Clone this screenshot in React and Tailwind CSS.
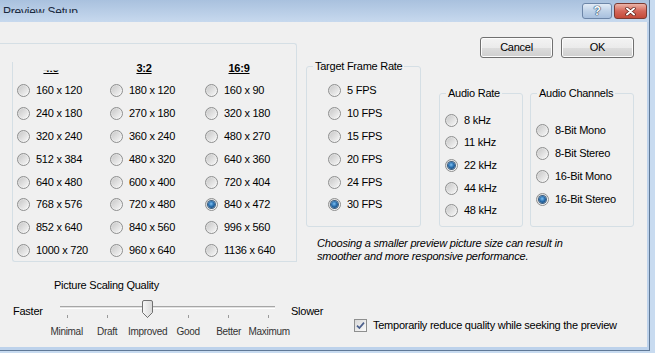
import React from "react";

const col1 = ["160 x 120", "240 x 180", "320 x 240", "512 x 384", "640 x 480", "768 x 576", "852 x 640", "1000 x 720"];
const col2 = ["180 x 120", "270 x 180", "360 x 240", "480 x 320", "600 x 400", "720 x 480", "840 x 560", "960 x 640"];
const col3 = ["160 x 90", "320 x 180", "480 x 270", "640 x 360", "720 x 404", "840 x 472", "996 x 560", "1136 x 640"];

function Radio({ checked }) {
  return (
    <span className="flex h-[13px] w-[13px] shrink-0 items-center justify-center rounded-full border border-[#8e8f8f] bg-gradient-to-br from-[#d4d4d4] to-[#fdfdfd]">
      {checked ? (
        <span className="h-[7px] w-[7px] rounded-full bg-[radial-gradient(circle_at_45%_40%,#7cc0f2_0%,#2a6faf_45%,#0d355e_100%)] shadow-[0_0_0_1px_#3d5f80]" />
      ) : (
        <span className="h-[9px] w-[9px] rounded-full bg-gradient-to-br from-[#c9c9c9] to-[#f5f5f5]" />
      )}
    </span>
  );
}

function RadioItem({ label, checked }) {
  return (
    <div className="flex h-[20px] items-center gap-[6px] whitespace-nowrap">
      <Radio checked={checked} />
      <span className="leading-[13px]">{label}</span>
    </div>
  );
}

function Button({ children }) {
  return (
    <div className="flex h-[21px] w-[73px] items-center justify-center rounded-[3px] border border-[#707070] bg-[linear-gradient(#f3f3f3,#ebebeb_50%,#dddddd_51%,#cfcfcf)] shadow-[inset_0_0_0_1px_#fcfcfc] leading-[13px]">
      {children}
    </div>
  );
}

export default function App() {
  const rows = [];
  for (let i = 0; i < 8; i++) {
    rows.push(<RadioItem key={"a" + i} label={col1[i]} />);
    rows.push(<RadioItem key={"b" + i} label={col2[i]} />);
    rows.push(<RadioItem key={"c" + i} label={col3[i]} checked={i === 5} />);
  }
  const labels = ["Minimal", "Draft", "Improved", "Good", "Better", "Maximum"];

  return (
    <div className="h-[353px] w-[655px] overflow-hidden bg-[#c8dbf0] font-['Liberation_Sans',Arial,sans-serif] text-[11px] tracking-[-0.25px] text-black">
      <div className="flex h-[351px] w-[650px] flex-col border-r border-b border-[#5f7896] bg-[#bdd2eb]">
        {/* Title bar */}
        <div className="flex h-[22px] shrink-0 items-start bg-gradient-to-b from-[#a9c1de] to-[#c7d9ee]">
          <div className="h-[13px] overflow-hidden pl-[3px] pt-[4.5px] text-[12px] leading-[14px] tracking-[-0.2px] text-[#1b2a40]">
            Preview Setup
          </div>
          <div className="ml-auto mr-[2px] mt-[3px] flex gap-[2px]">
            <div className="flex h-[16px] w-[30px] items-center justify-center rounded-[3px] border border-[#6d86a8] bg-gradient-to-b from-[#e2ebf6] via-[#bfd2e8] to-[#a8c0de]">
              <span className="text-[12px] font-bold leading-none text-white [text-shadow:0_0_1px_#1f3a5c,0_0_1px_#1f3a5c,0_0_1px_#1f3a5c]">?</span>
            </div>
            <div className="flex h-[16px] w-[33px] items-center justify-center rounded-[3px] border border-[#7c3b32] bg-gradient-to-b from-[#ebb4a9] via-[#d4675a] to-[#c44a39]">
              <svg width="11" height="9" viewBox="0 0 11 9">
                <path d="M2 1.5 L9 7.5 M9 1.5 L2 7.5" stroke="#5a1f18" strokeWidth="3.4" strokeLinecap="round" />
                <path d="M2 1.5 L9 7.5 M9 1.5 L2 7.5" stroke="#ffffff" strokeWidth="2" strokeLinecap="round" />
              </svg>
            </div>
          </div>
        </div>

        {/* Content */}
        <div className="mr-[2px] flex h-[325px] shrink-0 flex-col bg-[#f0f0f0]">
          <div className="flex h-[241px] shrink-0 items-start">
            {/* Left group */}
            <div className="mt-[21px] w-[297px] shrink-0 rounded-tr-[3px] border-t border-r border-[#d5dfe5]">
              <div className="ml-[12px] mt-[18px] rounded-bl-[3px] border-l border-b border-[#d5dfe5] pl-[4px]">
                <div className="grid h-[13px] grid-cols-[93px_95px_1fr] font-bold leading-[13px] underline">
                  <div className="w-[68px] text-center [clip-path:inset(8.5px_0_0_0)]">4:3</div>
                  <div className="w-[68px] text-center">3:2</div>
                  <div className="w-[68px] text-center">16:9</div>
                </div>
                <div className="mt-[5.7px] grid grid-cols-[93px_95px_1fr] gap-y-[2.86px]">{rows}</div>
              </div>
            </div>

            {/* Right column */}
            <div className="flex flex-1 flex-col">
              <div className="flex justify-end gap-[8px] pr-[13px] pt-[15px]">
                <Button>Cancel</Button>
                <Button>OK</Button>
              </div>
              <div className="ml-[9px] mt-[1.5px] flex items-end">
                <fieldset className="h-[167px] w-[115px] shrink-0 rounded-[3px] border border-[#d5dfe5]">
                  <legend className="ml-[6px] px-[2px] leading-[13px]">Target Frame Rate</legend>
                  <div className="mt-[8.2px] flex flex-col gap-[2.86px] pl-[21px]">
                    {["5 FPS", "10 FPS", "15 FPS", "20 FPS", "24 FPS", "30 FPS"].map((l) => (
                      <RadioItem key={l} label={l} checked={l === "30 FPS"} />
                    ))}
                  </div>
                </fieldset>
                <fieldset className="ml-[18px] h-[140px] w-[84px] shrink-0 rounded-[3px] border border-[#d5dfe5]">
                  <legend className="ml-[6px] px-[2px] leading-[13px]">Audio Rate</legend>
                  <div className="mt-[10.5px] flex flex-col gap-[2.7px] pl-[5px]">
                    {["8 kHz", "11 kHz", "22 kHz", "44 kHz", "48 kHz"].map((l) => (
                      <RadioItem key={l} label={l} checked={l === "22 kHz"} />
                    ))}
                  </div>
                </fieldset>
                <fieldset className="ml-[7px] h-[140px] w-[104px] shrink-0 rounded-[3px] border border-[#d5dfe5]">
                  <legend className="ml-[6px] px-[2px] leading-[13px]">Audio Channels</legend>
                  <div className="mt-[21.2px] flex flex-col gap-[3.1px] pl-[5px]">
                    {["8-Bit Mono", "8-Bit Stereo", "16-Bit Mono", "16-Bit Stereo"].map((l) => (
                      <RadioItem key={l} label={l} checked={l === "16-Bit Stereo"} />
                    ))}
                  </div>
                </fieldset>
              </div>
              <p className="ml-[20px] mt-[10px] whitespace-nowrap italic leading-[13.5px] tracking-[-0.2px]">
                Choosing a smaller preview picture size can result in
                <br />
                smoother and more responsive performance.
              </p>
            </div>
          </div>

          {/* Bottom section */}
          <div className="flex items-start">
            <div className="w-[340px] shrink-0">
              <div className="mt-[15.5px] pl-[54px] leading-[13px]">Picture Scaling Quality</div>
              <div className="mt-[8.5px] flex h-[20px]">
                <div className="w-[60px] shrink-0 pl-[13px] pt-[5px] leading-[13px]">Faster</div>
                <div className="relative h-[20px] w-[215px] shrink-0">
                  <div className="absolute left-0 right-0 top-[6px] h-[3px] border-t border-b border-t-[#a6a6a6] border-b-[#ffffff] bg-[#e2e2e2]" />
                  <div className="absolute left-[6.5px] right-[5.5px] top-[15px] flex h-[3px] justify-between">
                    {[0, 1, 2, 3, 4, 5].map((i) => (
                      <span key={i} className="h-[3px] w-px bg-[#9a9a9a]" />
                    ))}
                  </div>
                  <svg width="11" height="18" viewBox="0 0 11 18" className="absolute left-[82px] top-0">
                    <defs>
                      <linearGradient id="thumbg" x1="0" y1="0" x2="1" y2="0">
                        <stop offset="0" stopColor="#f7f7f7" />
                        <stop offset="1" stopColor="#d8d8d8" />
                      </linearGradient>
                    </defs>
                    <path d="M0.5 2 Q0.5 0.5 2 0.5 H9 Q10.5 0.5 10.5 2 V12.5 L5.5 17.5 L0.5 12.5 Z" fill="url(#thumbg)" stroke="#707070" />
                  </svg>
                </div>
                <div className="ml-[16px] pt-[5px] leading-[13px]">Slower</div>
              </div>
              <div className="mt-[5.7px] flex pl-[46.4px] text-[10px] leading-[12px] tracking-[-0.3px] text-[#333333]">
                {labels.map((l) => (
                  <span key={l} className="flex w-[40.5px] shrink-0 justify-center whitespace-nowrap">
                    {l}
                  </span>
                ))}
              </div>
            </div>
            <div className="ml-[14px] mt-[56px] flex items-center gap-[6px] whitespace-nowrap">
              <span className="flex h-[13px] w-[13px] shrink-0 items-center justify-center border border-[#8e8f8f] bg-gradient-to-br from-[#d8d8d8] to-[#fbfbfb]">
                <svg width="9" height="9" viewBox="0 0 9 9">
                  <path d="M1 4.6 L3.4 7 L8 1.6" fill="none" stroke="#4a5f8c" strokeWidth="1.7" />
                </svg>
              </span>
              <span className="leading-[13px]">Temporarily reduce quality while seeking the preview</span>
            </div>
          </div>
        </div>
      </div>
    </div>
  );
}
